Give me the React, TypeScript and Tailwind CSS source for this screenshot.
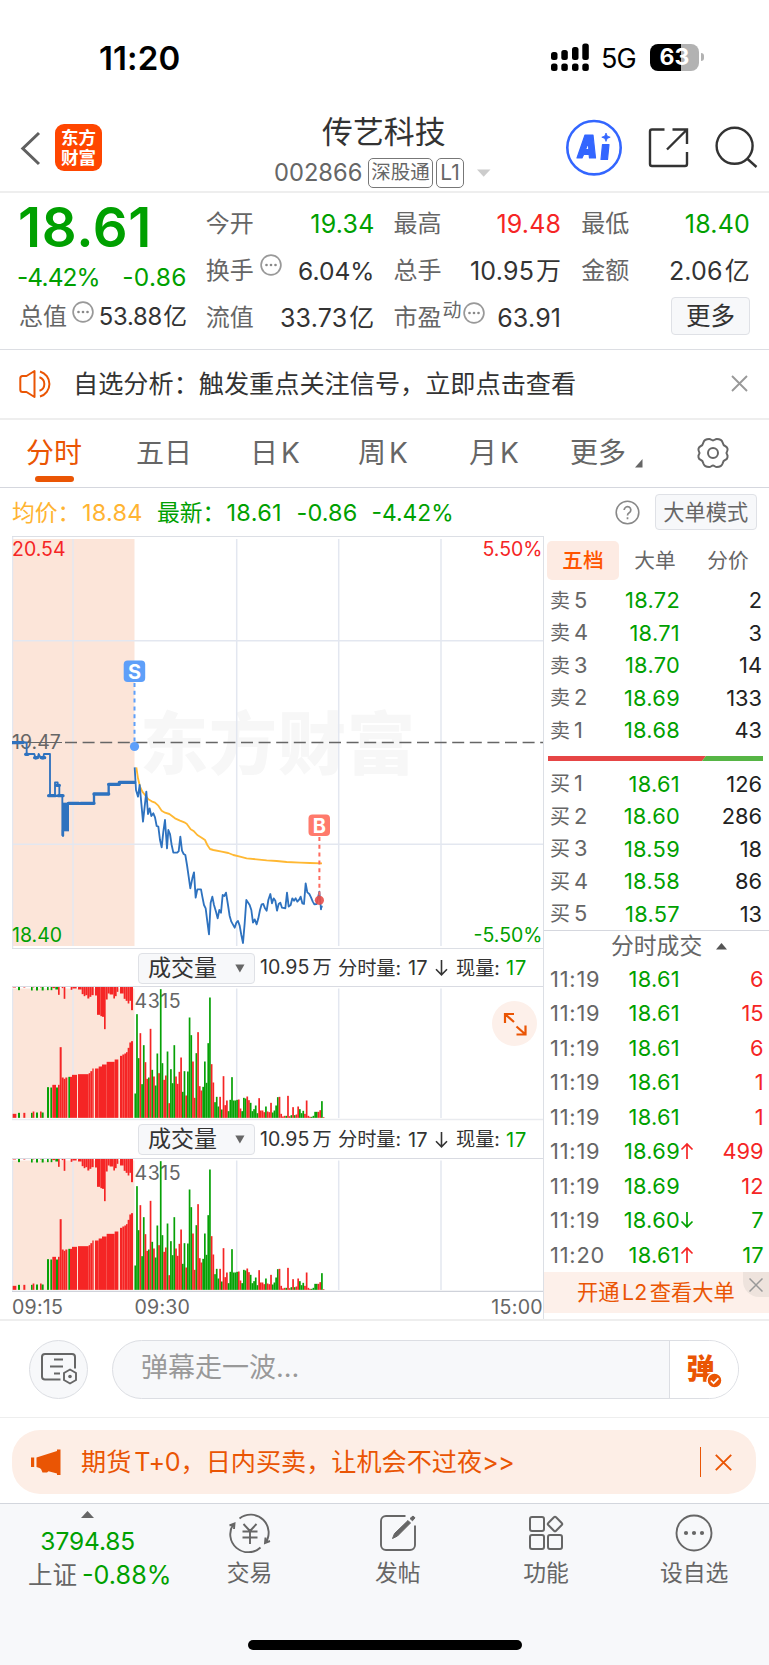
import React from "react";

type Row = [string, string, string];

const SELLS: Row[] = [
  ["卖", "18.72", "2"],
  ["卖", "18.71", "3"],
  ["卖", "18.70", "14"],
  ["卖", "18.69", "133"],
  ["卖", "18.68", "43"],
];
const BUYS: Row[] = [
  ["买", "18.61", "126"],
  ["买", "18.60", "286"],
  ["买", "18.59", "18"],
  ["买", "18.58", "86"],
  ["买", "18.57", "13"],
];

const TRADES: { time: string; price: string; dir?: "up" | "down"; qty: string; buy: boolean }[] = [
  { time: "11:19", price: "18.61", qty: "6", buy: true },
  { time: "11:19", price: "18.61", qty: "15", buy: true },
  { time: "11:19", price: "18.61", qty: "6", buy: true },
  { time: "11:19", price: "18.61", qty: "1", buy: true },
  { time: "11:19", price: "18.61", qty: "1", buy: true },
  { time: "11:19", price: "18.69", dir: "up", qty: "499", buy: true },
  { time: "11:19", price: "18.69", qty: "12", buy: true },
  { time: "11:19", price: "18.60", dir: "down", qty: "7", buy: false },
  { time: "11:20", price: "18.61", dir: "up", qty: "17", buy: false },
];

/* Minute volumes since 09:30: colour and bar height, in thirds of a pixel. */
const MINUTES =
  "g73 g311 g179 r254 g101 g218 r167 r117 g121 r267 g144 r124 g97 g193 r134 g386 g164 r114 r127 g199 r44 g146 g104 g218 r124 r102 r138 r181 g78 g140 r67 g139 g301 g248 r169 r60 g194 r257 r95 r82 g93 g169 g105 g224 g361 r161 r106 g47 g63 g34 r63 g25 r125 r38 r52 g20 g54 g122 g52 g52 g54 r55 r28 g20 g60 g58 r64 r53 g45 g20 g26 g37 g14 r59 r22 r22 r17 g34 r19 r17 r45 g16 g22 g37 g62 r63 r12 r4 r6 g6 r66 r5 g8 r32 g8 r10 r34 g26 g14 g21 r12 r52 r6 r3 g3 g6 g18 g18 r18 r23 g50 r2".split(" ");

/* Call auction bars: x, width, height, colour. */
const AUCTION: [number, number, number, string][] = [
  [38, 11, 12, "r"], [54, 6, 15, "g"], [70, 6, 15, "r"], [93, 5, 15, "g"], [98, 5, 19, "r"], [108, 6, 16, "g"],
  [120, 5, 19, "r"], [125, 6, 16, "g"], [141, 6, 92, "g"], [151, 5, 91, "g"], [157, 11, 99, "r"], [168, 6, 91, "g"],
  [174, 5, 99, "r"], [179, 6, 212, "r"], [185, 6, 121, "r"], [191, 5, 117, "r"], [196, 6, 121, "r"], [205, 5, 123, "g"],
  [210, 6, 123, "r"], [216, 15, 129, "r"], [234, 32, 131, "r"], [266, 5, 134, "r"], [271, 6, 140, "r"], [277, 4, 148, "r"],
  [285, 11, 148, "r"], [296, 10, 154, "r"], [306, 14, 160, "r"], [320, 24, 168, "r"], [344, 11, 175, "r"],
  [360, 7, 186, "r"], [367, 6, 190, "r"], [373, 5, 193, "r"], [378, 5, 197, "r"], [383, 6, 210, "r"], [388, 5, 226, "r"], [393, 6, 230, "r"],
];
const AUCTION_TOP: [number, number, number, string][] = [
  [38, 10, 2, "r"], [54, 6, 10, "g"], [70, 6, 2, "r"], [93, 5, 11, "g"], [98, 5, 2, "r"], [108, 6, 11, "g"], [120, 5, 2, "r"],
  [125, 6, 11, "g"], [141, 5, 10, "g"], [152, 5, 10, "g"], [157, 9, 4, "r"], [166, 8, 8, "g"], [174, 5, 24, "r"], [185, 5, 4, "r"],
  [191, 5, 36, "r"], [212, 5, 9, "r"], [217, 13, 5, "r"], [234, 11, 8, "r"], [245, 6, 22, "r"], [251, 5, 28, "r"],
  [256, 6, 25, "r"], [262, 6, 35, "r"], [268, 6, 30, "r"], [274, 7, 25, "r"], [285, 6, 26, "r"], [291, 10, 84, "r"],
  [301, 5, 88, "r"], [306, 6, 90, "r"], [312, 5, 127, "r"], [317, 6, 38, "r"], [323, 6, 20, "r"], [329, 11, 23, "r"],
  [340, 5, 35, "r"], [345, 5, 28, "r"], [350, 5, 15, "r"], [360, 11, 20, "r"], [371, 6, 36, "r"], [377, 6, 42, "r"],
  [383, 5, 50, "r"], [388, 5, 42, "r"], [393, 6, 70, "r"],
];
const INK: Record<string, string> = { r: "#f52525", g: "#06a106" };

const PRICE =
  "404,712 408,780 414,800 419,765 424,820 429,875 434,830 439,785 444,852 449,835 454,858 460,850 465,862 470,888 475,890 480,930 485,952 490,905 495,870 501,955 505,900 510,912 515,945 520,968 531,968 536,964 541,920 546,962 551,972 556,975 561,1005 566,1040 571,1075 577,1045 582,1027 587,1103 592,1078 603,1078 607,1100 612,1125 617,1135 622,1175 627,1213 632,1118 637,1100 642,1125 648,1145 653,1165 658,1140 663,1148 668,1095 673,1098 678,1088 684,1125 689,1158 694,1175 704,1193 709,1178 714,1173 719,1187 724,1215 729,1239 734,1180 739,1110 749,1125 754,1140 759,1178 764,1168 770,1183 775,1165 780,1140 785,1123 790,1122 795,1135 800,1142 805,1110 811,1092 816,1120 821,1105 826,1112 831,1142 836,1122 841,1118 846,1133 856,1135 861,1088 866,1130 872,1125 877,1105 882,1112 887,1105 892,1115 898,1108 902,1100 907,1120 912,1122 917,1060 922,1087 928,1092 933,1102 938,1114 943,1123 950,1122 958,1085 963,1138 964,1130 968,1130";
const AVERAGE =
  "409,712 414,745 420,770 427,785 435,795 445,808 455,814 465,818 475,827 485,842 495,848 508,852 515,857 525,865 540,872 555,878 560,881 572,898 582,904 592,915 605,923 615,930 622,945 630,957 640,960 665,965 685,969 700,975 720,980 740,985 770,988 800,991 830,993 860,996 900,998 930,999 966,1000";

function StatusBar() {
  return (
    <div className="flex h-[104px] items-start pl-[99px] pr-[65px] text-black">
      <span className="mt-[38px] text-[33px] leading-[40px] font-semibold tracking-[0.1px]">11:20</span>
      <svg className="mt-[43px] ml-auto" width="40" height="30" viewBox="550 43 40 30">
        <g>
          <rect x="551" y="52" width="6.5" height="8" rx="2.5" />
          <rect x="561.3" y="50" width="6.5" height="10" rx="2.5" />
          <rect x="572" y="47" width="6.5" height="13" rx="2.5" />
          <rect x="582.3" y="43.5" width="6.5" height="16.5" rx="2.5" />
          <rect x="551" y="63.5" width="6.5" height="7.5" rx="2.5" />
          <rect x="561.3" y="63.5" width="6.5" height="7.5" rx="2.5" />
          <rect x="572" y="63.5" width="6.5" height="7.5" rx="2.5" />
          <rect x="582.3" y="63.5" width="6.5" height="7.5" rx="2.5" />
        </g>
      </svg>
      <span className="mt-[42px] ml-[11px] w-[37px] text-[27px] leading-[34px] tracking-[-0.8px]">5G</span>
      <div className="mt-[43.5px] ml-[12px] flex items-center">
        <div className="flex h-[27px] w-[49px] items-center justify-center rounded-[8px] bg-linear-to-r from-black from-[63%] to-[#b2b2b2] to-[63%] text-[23px] leading-none font-bold text-white">
          63
        </div>
        <div className="ml-[2px] h-[8px] w-[3px] rounded-r-full bg-[#b2b2b2]" />
      </div>
    </div>
  );
}

function TitleBar() {
  return (
    <div className="flex h-[89px] border-b-2 border-[#eeeeee]">
      <div className="flex w-[275px] items-start pt-[20px] pl-[19px]">
        <svg className="mt-[6px]" width="24" height="36" viewBox="0 0 24 36" fill="none" stroke="#606060" strokeWidth="3">
          <path d="M20 3 3.8 18.5 20 34" />
        </svg>
        <div className="ml-[12px] flex h-[47px] w-[47px] flex-col items-center justify-center rounded-[9px] bg-[#ff4600] text-[17.5px] leading-[19.5px] font-bold text-white">
          <span>东方</span>
          <span>财富</span>
        </div>
      </div>
      <div className="flex w-[218px] flex-col">
        <span className="mt-[8px] ml-[47px] text-[30.9px] leading-[40px] text-[#333]">传艺科技</span>
        <div className="mt-[5px] flex items-center text-[#666]">
          <span className="ml-[-1px] w-[94px] text-[23.7px] leading-[31px]">002866</span>
          <span className="flex h-[30px] w-[65px] items-center justify-center rounded-[5px] border-[1.5px] border-[#777] text-[19.5px] leading-none">
            深股通
          </span>
          <span className="ml-[3px] flex h-[30px] w-[28px] items-center justify-center rounded-[5px] border-[1.5px] border-[#777] text-[21px] leading-none">
            L1
          </span>
          <svg className="ml-[13px]" width="14" height="8" viewBox="0 0 14 8">
            <path d="M0 0.5h13.5L6.7 7.8z" fill="#ccc" />
          </svg>
        </div>
      </div>
      <svg className="ml-[69px]" width="207" height="86" viewBox="562 104 207 86" fill="none" stroke="#333" strokeWidth="2.4">
        <circle cx="594" cy="147.7" r="26.7" stroke="#3366ff" strokeWidth="2.6" />
        <path
          d="M577 158l8-23h8l2.5 23h-6l-.4-3.500h-5.500L582 158zM585.500 149.500h3.300l-.4-7z"
          fill="#3366ff"
          fillRule="evenodd"
          stroke="#3366ff"
          strokeWidth="1.2"
          strokeLinejoin="round"
        />
        <path d="M602.5 144.500h6.500l-1.500 15h-6.500z" fill="#3366ff" stroke="#3366ff" strokeWidth="1.2" strokeLinejoin="round" />
        <path d="M606 133l1.200 3 3 1.200-3 1.200-1.200 3-1.200-3-3-1.200 3-1.200z" fill="#3366ff" stroke="#3366ff" strokeWidth="0.8" />
        <path d="M664.5 129.500H652a2 2 0 0 0-2 2V164a2 2 0 0 0 2 2h33a2 2 0 0 0 2-2v-12M672.500 129.500H687v14.500M686 130.500 667 149.500" />
        <circle cx="734.6" cy="145.8" r="18" />
        <path d="M747 158.500 756.500 167" />
      </svg>
    </div>
  );
}

function MoreDots() {
  return (
    <svg width="22" height="22" viewBox="0 0 22 22" className="shrink-0">
      <circle cx="11" cy="11" r="9.9" fill="none" stroke="#999" strokeWidth="1.7" />
      <g fill="#888">
        <circle cx="6.5" cy="11" r="1.3" />
        <circle cx="11" cy="11" r="1.3" />
        <circle cx="15.5" cy="11" r="1.3" />
      </g>
    </svg>
  );
}

const label = "text-[24px] text-[#666]";
const value = "ml-auto text-[25px] tracking-[0.2px]";

function Quote() {
  return (
    <div className="flex h-[157px] border-b border-[#dcdee3] px-[19px] leading-[30px] whitespace-nowrap text-[#333]">
      <div className="flex w-[168px] flex-col">
        <span className="mt-[7px] ml-[-1px] text-[54.5px] leading-[54px] font-semibold tracking-[0.7px] text-[#00a000]">18.61</span>
        <div className="mt-[8px] ml-[-2px] flex justify-between text-[24.5px] text-[#00a000]">
          <span className="tracking-[-0.9px]">-4.42%</span>
          <span className="tracking-[0.3px]">-0.86</span>
        </div>
        <div className="mt-[10px] flex">
          <span className={label}>总值</span>
          <span className="mt-[-1px] ml-[5px] h-[22px]"><MoreDots /></span>
          <span className="ml-auto text-[23.8px] tracking-[-0.2px]">53.88<span className="ml-[1px]">亿</span></span>
        </div>
      </div>
      <div className="ml-[19px] flex w-[169px] flex-col gap-[17px] pt-[15.5px]">
        <div className="flex"><span className={label}>今开</span><span className={value + " text-[#00a000]"}>19.34</span></div>
        <div className="flex"><span className={label}>换手</span><span className="mt-[-2px] ml-[6px] h-[22px]"><MoreDots /></span><span className="ml-auto text-[24.6px]">6.04%</span></div>
        <div className="flex"><span className={label}>流值</span><span className={value}>33.73<span className="ml-[2px]">亿</span></span></div>
      </div>
      <div className="ml-[19px] flex w-[168px] flex-col gap-[17px] pt-[15.5px]">
        <div className="flex"><span className={label}>最高</span><span className={value + " text-[#f52525]"}>19.48</span></div>
        <div className="flex"><span className={label}>总手</span><span className={value}>10.95<span className="ml-[2px]">万</span></span></div>
        <div className="flex">
          <span className={label}>市盈</span>
          <span className="mt-[-7px] ml-[1px] text-[19px] text-[#666]">动</span>
          <span className="mt-[-1px] ml-[1px] h-[22px]"><MoreDots /></span>
          <span className={value}>63.91</span>
        </div>
      </div>
      <div className="ml-[20px] flex w-[169px] flex-col pt-[15.5px]">
        <div className="flex"><span className={label}>最低</span><span className={value + " text-[#00a000]"}>18.40</span></div>
        <div className="mt-[17px] flex"><span className={label}>金额</span><span className={value}>2.06<span className="ml-[2px]">亿</span></span></div>
        <div className="mt-[11px] ml-auto flex h-[38px] w-[79px] items-center justify-center rounded-[4px] border-[1.5px] border-[#dfe1e6] bg-[#f7f8fa] text-[24.5px]">
          更多
        </div>
      </div>
    </div>
  );
}

function Notice() {
  return (
    <div className="flex h-[70px] items-center border-b-2 border-[#eeeeee] pb-[1px] pl-[19px] text-[#333]">
      <svg width="34" height="30" viewBox="0 0 34 30" fill="none" stroke="#ea5504" strokeWidth="2">
        <path d="M15.5 2v26L7.500 23H3.500Q1.300 23 1.300 20.500V9.500Q1.300 7 3.500 7h4zM20.500 8.200a7.200 7.200 0 0 1 0 13.600M21 2.500a13 13 0 0 1 0 25" strokeLinejoin="round" />
      </svg>
      <span className="ml-[20px] text-[25.16px] leading-[36px]">自选分析：触发重点关注信号，立即点击查看</span>
      <svg className="mr-[21px] ml-auto" width="17" height="17" viewBox="0 0 17 17" stroke="#999" strokeWidth="1.9">
        <path d="M1 1l15 15M16 1 1 16" />
      </svg>
    </div>
  );
}

function PeriodTabs() {
  return (
    <div className="flex h-[68px] border-b-[1.5px] border-[#d5d7de] pl-[26px] text-[28px] leading-[40px] text-[#666]">
      <div className="flex w-[110px] flex-col pt-[13px]">
        <span className="text-[#ea5504]">分时</span>
        <span className="mt-[3px] ml-[9px] h-[6px] w-[39px] rounded-full bg-[#ea5504]" />
      </div>
      <span className="w-[114px] pt-[13px]">五日</span>
      <span className="w-[108px] pt-[13px]">日<span className="ml-[3px]">K</span></span>
      <span className="w-[111px] pt-[13px]">周<span className="ml-[3px]">K</span></span>
      <span className="w-[101px] pt-[13px]">月<span className="ml-[3px]">K</span></span>
      <span className="pt-[13px]">更多</span>
      <svg className="mt-[39px] ml-[9px]" width="8" height="9" viewBox="0 0 8 9"><path d="M7.5 0v8.500H0z" fill="#666" /></svg>
      <svg className="mt-[17px] ml-[53px]" width="34" height="32" viewBox="-17 -16 34 32" fill="none" stroke="#666" strokeWidth="2">
        <path
          d="M-3.800-14C-2-14-1.500-12.600 0-12.600S2-14 3.800-14C7-14 9-12.500 9.600-10.500 10-8.500 10.500-7.500 12.500-6.800 14.500-6 15.200-3 14-1.300 13.300-.5 13.300.5 14 1.300 15.200 3 14.500 6 12.500 6.800 10.500 7.500 10 8.500 9.600 10.500 9 12.500 7 14 3.800 14 2 14 1.500 12.600 0 12.600S-2 14-3.800 14C-7 14-9 12.500-9.600 10.500-10 8.500-10.500 7.500-12.500 6.800-14.500 6-15.200 3-14 1.300-13.300.5-13.300-.5-14-1.300-15.200-3-14.500-6-12.500-6.800-10.500-7.500-10-8.500-9.600-10.500-9-12.500-7-14-3.800-14z"
        />
        <circle r="5" />
      </svg>
    </div>
  );
}

function Summary() {
  return (
    <div className="mr-[12.5px] ml-[12px] flex h-[48px] items-center pt-[1px] text-[22.8px] leading-[34px] whitespace-nowrap text-[#00a000]">
      <span className="w-[70px] text-[#ffb432]">均价：</span>
      <span className="w-[75px] text-[23.5px] tracking-[0.2px] text-[#ffb432]">18.84</span>
      <span className="w-[69.5px]">最新：</span>
      <span className="w-[70px] text-[23.5px] tracking-[0.3px]">18.61</span>
      <span className="w-[75px] text-[23.5px] tracking-[0.1px]">-0.86</span>
      <span>-4.42%</span>
      <svg className="mr-[15.5px] ml-auto" width="25" height="25" viewBox="0 0 25 25" fill="none" stroke="#888" strokeWidth="1.6">
        <circle cx="12.5" cy="12.5" r="11.3" />
        <path d="M9.200 10a3.300 3.300 0 1 1 5 2.800q-1.700 1-1.700 2.700M12.500 17.200v2" strokeWidth="1.7" />
      </svg>
      <span className="mt-[-1px] flex h-[36px] w-[101.5px] items-center justify-center rounded-[4px] border-[1.5px] border-[#dfe1e6] bg-[#f7f8fa] text-[21.2px] text-[#666]">
        大单模式
      </span>
    </div>
  );
}

function PriceChart() {
  return (
    <svg width="531" height="412" viewBox="12 537 531 412" className="block" fontFamily="Inter, 'Noto Sans CJK SC', sans-serif">
      <rect x="12.5" y="539" width="122" height="407" fill="#fce5d9" />
      <text x="140" y="769" fontSize="68" fontWeight="900" fill="#f7f7f7" letterSpacing="1">东方财富</text>
      <g stroke="#e3e7f0" strokeWidth="1.5">
        <path d="M73 539V946M236.700 539V946M338.700 539V946M441 539V946M12 640.700H543M12 844.200H543" />
        <path d="M12.500 537V949" />
      </g>
      <path d="M12 948.500H543" stroke="#dcdfe5" />
      <text x="12" y="555.6" fontSize="19.5" fill="#f52525">20.54</text>
      <text x="542.5" y="555.6" fontSize="19.5" fill="#f52525" textAnchor="end">5.50%</text>
      <text x="12" y="941.5" fontSize="19.5" fill="#00a000">18.40</text>
      <text x="542.5" y="941.5" fontSize="19.5" fill="#00a000" textAnchor="end">-5.50%</text>
      <path d="M12 742.500H62" stroke="#666" strokeWidth="1.2" />
      <path d="M65 742.500H543" stroke="#666" strokeWidth="1.3" strokeDasharray="12 5.6" />
      <text x="12" y="748.7" fontSize="19.5" fill="#666">19.47</text>
      <g transform="translate(0 530) scale(0.333333)" fill="none" strokeLinejoin="round">
        <polyline points={AVERAGE} stroke="#ffb833" strokeWidth="5.5" />
        <g stroke="#2e72bf" strokeWidth="5.5">
          <path d="M38 637H80V672H103L107 686 113 684 116 672 122 684 129 686 132 672H150V797H165V757H173V766H178V797H187V917" />
          <path d="M38 638H68M104 683H112M124 683H134M77 673H84M146 797H166M170 766H178M175 797H189M205 820H237M282 792H326M326 763H358M358 757H404M242 820H282" strokeWidth="10" strokeLinecap="round" />
          <path d="M197 818V904" strokeWidth="20" />
          <path d="M189 900V917M282 820V792M326 792V763" strokeWidth="7" strokeLinecap="round" />
          <polyline points={PRICE} />
        </g>
      </g>
      <path d="M134.5 683V742" stroke="#5e9ff9" strokeWidth="2" strokeDasharray="4 3.8" />
      <circle cx="134.5" cy="746.5" r="4.6" fill="#5e9ff9" />
      <rect x="123.7" y="660.5" width="21.5" height="21.5" rx="4" fill="#5e9ff9" />
      <text x="134.5" y="678.5" fontSize="20" fontWeight="700" fill="#fff" textAnchor="middle">S</text>
      <path d="M319.4 837V896" stroke="#ff6b5e" strokeWidth="2" strokeDasharray="4 3.8" />
      <circle cx="319.4" cy="900.3" r="4.6" fill="#e8504a" fillOpacity="0.9" />
      <rect x="308.5" y="814.5" width="21.5" height="21.5" rx="4" fill="#ff7a6c" />
      <text x="319.3" y="832.5" fontSize="20" fontWeight="700" fill="#fff" textAnchor="middle">B</text>
    </svg>
  );
}

function VolumeHeader() {
  return (
    <div className="flex h-[38px] items-center border-b-[1.5px] border-[#d9dbe2] pt-[1px] pl-[126px] text-[19.2px] whitespace-nowrap text-[#333]">
      <span className="flex h-[31px] w-[117px] items-center rounded-[4px] border-[1.5px] border-[#dfe1e6] bg-[#f7f8fa] pl-[9px] text-[23px] leading-none">
        成交量
        <svg className="ml-[18px]" width="10" height="9" viewBox="0 0 10 9"><path d="M.3.500h9.200L4.900 8.500z" fill="#666" /></svg>
      </span>
      <span className="ml-[5px] w-[78px]"><span className="text-[19.6px]">10.95</span><span className="ml-[3px]">万</span></span>
      <span className="w-[70px]">分时量:</span>
      <span className="w-[27px] text-[20px]">17</span>
      <svg className="mr-[8px]" width="13" height="16" viewBox="0 0 13 16" fill="none" stroke="#333" strokeWidth="1.6"><path d="M6.500 0v14.500M1 9.300l5.500 5.500L12 9.300" /></svg>
      <span className="w-[50px]">现量:</span>
      <span className="text-[20px] tracking-[0.8px] text-[#00a000]">17</span>
    </div>
  );
}

function VolumeChart({ expand, last }: { expand?: boolean; last?: boolean }) {
  return (
    <div className="relative h-[133.5px]">
      <svg width="531" height="133.5" viewBox="12 987.5 531 133.5" className="block" fontFamily="Inter, sans-serif">
        <rect x="12.5" y="989" width="122" height="129.5" fill="#fce5d9" />
        <path d="M73 989V1118.500M236.700 989V1118.500M338.700 989V1118.500M441 989V1118.500M12.500 989V1119" stroke="#e3e7f0" strokeWidth="1.5" />
        <path d="M12 1120H543" stroke={last ? "#cfd2da" : "#e9ebef"} strokeWidth="1.5" />
        <text x="134.5" y="1008.5" fontSize="19.6" letterSpacing="0.5" fill="#666">4315</text>
        <g transform="translate(0 940) scale(0.333333)">
          {AUCTION.map(([x, w, h, c], i) => (
            <rect key={"a" + i} x={x} y={535 - h} width={w} height={h} fill={INK[c]} />
          ))}
          {AUCTION_TOP.map(([x, w, h, c], i) => (
            <rect key={"t" + i} x={x} y={142} width={w} height={h} fill={INK[c]} />
          ))}
          {MINUTES.map((m, i) => {
            const h = Number(m.slice(1));
            return <rect key={"m" + i} x={403.3 + 5.09 * i} y={535 - h} width="5.1" height={h} fill={INK[m[0]]} />;
          })}
        </g>
      </svg>
      {expand && (
        <span className="absolute top-[14px] left-[480px] flex h-[45px] w-[45px] items-center justify-center rounded-full bg-[#fdf0ea]">
          <svg width="24" height="24" viewBox="0 0 24 24" fill="none" stroke="#ea5504" strokeWidth="2.2">
            <path d="M11 2H2v9M2 2l9 8M13.500 22.500h9v-9M22.500 22.500l-9-8" />
          </svg>
        </span>
      )}
    </div>
  );
}

function BookRows({ rows, sell }: { rows: Row[]; sell?: boolean }) {
  return (
    <div>
      {rows.map(([side, price, qty], i) => (
        <div key={price} className="flex h-[32.5px] items-center pr-[7px] pl-[6px] text-[21.8px] leading-[32px]">
          <span className="w-[52px] text-[20px] text-[#666]">{side}<span className="ml-[4px] text-[21.8px]">{sell ? 5 - i : i + 1}</span></span>
          <span className="w-[78px] text-right tracking-[0.3px] text-[#00a000]">{price}</span>
          <span className="ml-auto text-[#222]">{qty}</span>
        </div>
      ))}
    </div>
  );
}

function Arrow({ up }: { up: boolean }) {
  return (
    <svg width="14" height="18" viewBox="0 0 14 18" fill="none" stroke={up ? "#f52525" : "#00a000"} strokeWidth="1.7">
      <path d={up ? "M7 17V2M1.500 7.500 7 2l5.500 5.500" : "M7 1v15M1.500 10.500 7 16l5.500-5.500"} />
    </svg>
  );
}

function OrderBook() {
  return (
    <div className="flex w-[226px] flex-col border-l-[1.5px] border-[#dcdfe5]">
      <div className="flex pt-[5px] pl-[3px] text-[20.7px] text-[#666]">
        <span className="flex h-[39px] w-[72px] items-center justify-center rounded-[5px] bg-[#fdebe3] font-medium text-[#ff5500]">五档</span>
        <span className="flex h-[39px] w-[72px] items-center justify-center">大单</span>
        <span className="flex h-[39px] w-[74px] items-center justify-center">分价</span>
      </div>
      <div className="mt-[4px]"><BookRows rows={SELLS} sell /></div>
      <svg className="mt-[9.5px] ml-[4px]" width="215" height="5" viewBox="0 0 215 5">
        <path d="M0 0H158l-4 5H0z" fill="#e64545" />
        <path d="M158 0h57v5H154z" fill="#56b545" />
      </svg>
      <div className="mt-[6.5px]"><BookRows rows={BUYS} /></div>
      <div className="flex h-[31.5px] items-center border-t-[1.5px] border-[#d5d7de] pl-[67px] text-[22.8px] leading-none text-[#666]">
        分时成交
        <svg className="ml-[14px]" width="11" height="7" viewBox="0 0 11 7"><path d="M0 6.500 5.500 0 11 6.500z" fill="#555" /></svg>
      </div>
      {TRADES.map((t, i) => (
        <div key={i} className="flex h-[34.5px] items-center pr-[5.5px] pl-[6px] text-[21.8px] leading-[34px]">
          <span className="w-[52px] tracking-[0.8px] text-[#666]">{t.time}</span>
          <span className="w-[78px] text-right tracking-[0.3px] text-[#00a000]">{t.price}</span>
          {t.dir && <Arrow up={t.dir === "up"} />}
          <span className={t.buy ? "ml-auto text-[#f52525]" : "ml-auto text-[#00a000]"}>{t.qty}</span>
        </div>
      ))}
      <div className="relative flex h-[41px] items-center bg-[#fdf0ea] pl-[33px] text-[21.3px] text-[#ea5504]">
        开通<span className="mx-[2.5px]">L2</span>查看大单
        <span className="absolute top-0 right-0 flex h-[25px] w-[26px] items-center justify-center rounded-bl-[16px] bg-[#eee3dd]">
          <svg width="14" height="14" viewBox="0 0 14 14" stroke="#999" strokeWidth="1.5"><path d="M.5.5l13 13M13.500.5l-13 13" /></svg>
        </span>
      </div>
    </div>
  );
}

function CommentBar() {
  return (
    <div className="flex h-[97px] items-start border-b border-[#eeeeee] pt-[18.5px] pl-[29px]">
      <span className="flex h-[59px] w-[59px] items-center justify-center rounded-full border border-[#dcdee3] bg-[#f7f8fa]">
        <svg width="40" height="36" viewBox="0 0 40 36" fill="none" stroke="#666" strokeWidth="2">
          <path d="M21.500 28.500H6a3 3 0 0 1-3-3V6a3 3 0 0 1 3-3h27a3 3 0 0 1 3 3v11.500M15 8.500h9M11 15.500h13M15 22.500h6" />
          <path d="M31 18.500l6 3.500v7l-6 3.500-6-3.500v-7z" strokeWidth="1.9" />
          <circle cx="31" cy="25.5" r="1.8" fill="#666" stroke="none" />
        </svg>
      </span>
      <div className="ml-[23.5px] flex h-[59px] w-[627px] overflow-hidden rounded-full border border-[#dcdee3] bg-[#f7f8fa]">
        <span className="w-[556px] pt-[7px] pl-[28.5px] text-[27px] leading-[40px] text-[#999]">弹幕走一波...</span>
        <span className="relative flex-1 border-l border-[#dcdee3] bg-white pt-[10px] pl-[17px] text-[28px] leading-[36px] font-black text-[#ea5504]">
          弹
          <svg className="absolute top-[31px] left-[36px]" width="17" height="17" viewBox="0 0 17 17">
            <circle cx="8.5" cy="8.5" r="7.5" fill="#ea5504" stroke="#fff" strokeWidth="1.5" />
            <path d="M4.800 8.500l2.800 2.800 4.800-5" fill="none" stroke="#fff" strokeWidth="1.7" />
          </svg>
        </span>
      </div>
    </div>
  );
}

function Banner() {
  return (
    <div className="mr-[13px] ml-[12px] mt-[12px] flex h-[64px] items-center rounded-[28px] bg-[#fdeee6] pl-[19px] text-[#ea5504]">
      <svg width="30" height="27" viewBox="0 0 30 27" fill="#ea5504">
        <path d="M0 8.500h3.200V18H0zM5.500 8.500 26 2V.5h3.500V26H26v-1.500l-8.500-2.300-1.500 1.300h-4.500L10 20l-1.500-1L5.500 18z" />
      </svg>
      <span className="ml-[20px] pt-[1px] text-[25.13px] whitespace-nowrap">
        期货<span className="ml-[3px] tracking-[-0.2px]">T+0</span>，日内买卖，让机会不过夜<span className="tracking-[-0.7px]">&gt;&gt;</span>
      </span>
      <span className="ml-auto h-[30px] w-[1.5px] bg-[#ea5504]" />
      <svg className="mr-[24px] ml-[14px]" width="17" height="17" viewBox="0 0 17 17" stroke="#ea5504" strokeWidth="1.9"><path d="M.8.8l15.400 15.400M16.200.8.8 16.200" /></svg>
    </div>
  );
}

function NavItem({ text, children }: { text: string; children: React.ReactNode }) {
  return (
    <div className="flex w-[148.2px] flex-col items-center pt-[9px]">
      <svg width="42" height="40" viewBox="-21 -20 42 40" fill="none" stroke="#666" strokeWidth="2">{children}</svg>
      <span className="mt-[3px] text-[22.8px] leading-[34px]">{text}</span>
    </div>
  );
}

function BottomNav() {
  return (
    <div className="mt-[8.5px] flex h-[162px] flex-col border-t-[1.5px] border-[#d3d6dd] bg-[#f7f8fa] text-[#666]">
      <div className="flex h-[136px]">
        <div className="flex w-[175.5px] flex-col items-center pt-[7.5px]">
          <svg width="13" height="7" viewBox="0 0 13 7"><path d="M0 7 6.500 0 13 7z" fill="#666" /></svg>
          <span className="mt-[5.5px] text-[24.5px] leading-[34px] tracking-[-0.1px] text-[#00a000]">3794.85</span>
          <span className="ml-[24px] text-[24.5px] leading-[34px] whitespace-nowrap">上证<span className="ml-[5px] text-[25.2px] text-[#00a000]">-0.88%</span></span>
        </div>
        <NavItem text="交易">
          <path d="M-10.500-14.500A18 18 0 0 1 15 10.500M10.500 14.500A18 18 0 0 1-16.500-9M-20.500-7.500l5-2-.5 5.500M15.500 4.500l-.5 5.500 5-2M-6.500-9 0-2l6.500-7M0-2V11M-7.500-1.500h15M-7.500 4.500h15" strokeWidth="1.9" />
        </NavItem>
        <NavItem text="发帖">
          <path d="M7.500-17H-12a5 5 0 0 0-5 5v24a5 5 0 0 0 5 5h24a5 5 0 0 0 5-5V-7.500" strokeWidth="1.9" />
          <path d="M-5.500 5.500l2-5L10-12.500l2.500 2.500L-.5 3zM12-14.500l3-2.500 2 1.800-2.500 3z" fill="#666" strokeWidth="1" />
        </NavItem>
        <NavItem text="功能">
          <rect x="-16" y="-16" width="14" height="14" rx="2" />
          <rect x="-16" y="2" width="14" height="14" rx="2" />
          <rect x="2" y="2" width="14" height="14" rx="2" />
          <rect x="3.5" y="-14.5" width="11" height="11" rx="1.5" transform="rotate(45 9 -9)" />
        </NavItem>
        <NavItem text="设自选">
          <circle r="17.5" strokeWidth="1.9" />
          <g fill="#666" stroke="none"><circle cx="-8" r="2.1" /><circle r="2.1" /><circle cx="8" r="2.1" /></g>
        </NavItem>
      </div>
      <div className="mx-auto h-[10px] w-[274px] rounded-full bg-black" />
    </div>
  );
}

export default function App() {
  return (
    <div className="h-[1665px] w-[769px] overflow-hidden bg-white font-[Inter,'Noto_Sans_CJK_SC',sans-serif]" lang="zh-CN">
      <StatusBar />
      <TitleBar />
      <Quote />
      <Notice />
      <PeriodTabs />
      <Summary />
      <div className="flex h-[785px] border-b-2 border-[#eeeeee]">
        <div className="ml-[12px] w-[531px] border-t border-[#dcdfe5]">
          <PriceChart />
          <VolumeHeader />
          <VolumeChart expand />
          <VolumeHeader />
          <VolumeChart last />
          <div className="flex h-[27px] items-center pt-[4px] text-[19.6px] leading-[27px] text-[#666]">
            <span className="w-[122.5px] tracking-[0.2px]">09:15</span>
            <span className="tracking-[0.2px]">09:30</span>
            <span className="ml-auto tracking-[0.3px]">15:00</span>
          </div>
        </div>
        <OrderBook />
      </div>
      <CommentBar />
      <Banner />
      <BottomNav />
    </div>
  );
}
